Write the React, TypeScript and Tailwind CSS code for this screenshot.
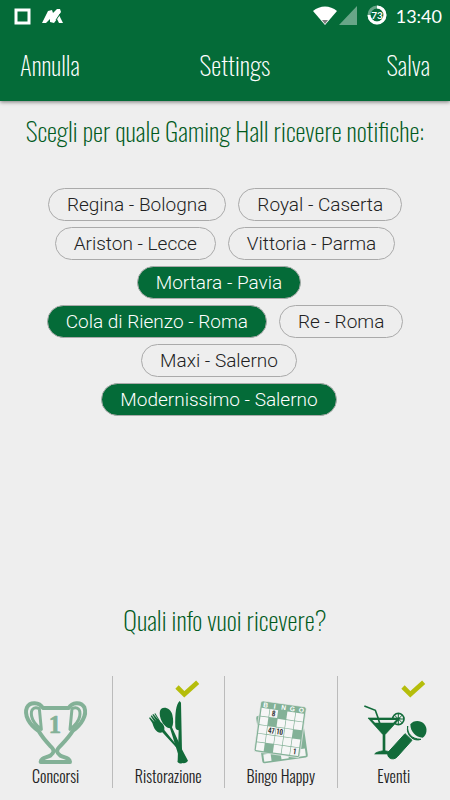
import React, { useState } from 'react';

const condensed = "font-['Oswald','Liberation_Sans_Narrow','Liberation_Sans',sans-serif]";

interface Hall {
  name: string;
  selected: boolean;
  ownRow?: boolean;
}

const initialHalls: Hall[] = [
  { name: 'Regina - Bologna', selected: false },
  { name: 'Royal - Caserta', selected: false },
  { name: 'Ariston - Lecce', selected: false },
  { name: 'Vittoria - Parma', selected: false },
  { name: 'Mortara - Pavia', selected: true, ownRow: true },
  { name: 'Cola di Rienzo - Roma', selected: true },
  { name: 'Re - Roma', selected: false },
  { name: 'Maxi - Salerno', selected: false, ownRow: true },
  { name: 'Modernissimo - Salerno', selected: true, ownRow: true },
];

const Trophy = () => (
  <g stroke="currentColor" fill="none" strokeLinejoin="round">
    <path
      strokeWidth="12"
      d="M129 114H206C216 96 243 94 253 112C262 136 244 164 218 183C205 204 194 214 179 230C168 241 169 248 181 257C197 264 209 264 210 276H122C123 264 136 264 151 257C163 248 164 241 153 230C138 214 128 204 116 183C88 164 71 136 81 112C90 94 118 96 129 114Z"
    />
    <path strokeWidth="9" d="M118 116C101 108 91 119 95 139C98 155 108 166 124 178Z" />
    <path strokeWidth="9" d="M216 116C233 108 243 119 239 139C236 155 226 166 210 178Z" />
    <text
      x="165"
      y="188"
      textAnchor="middle"
      fill="currentColor"
      stroke="currentColor"
      strokeWidth="2"
      className="font-['Liberation_Serif',serif] text-[74px] font-bold"
    >
      1
    </text>
  </g>
);

const Cutlery = () => (
  <g fill="currentColor">
    <path d="M203 93C192 103 189 129 190 171C191 179 195 180 200 181L197 272C203 281 219 279 224 270L210 245L207 98Z" />
    <path d="M147 117C158 108 176 116 181 134C185 151 184 164 180 172L211 240L228 272C221 282 211 280 206 277L174 175C163 174 151 161 146 146C142 134 142 123 147 117Z" />
    <path d="M136 185C129 181 125 172 121 159L111 144L114 142L128 157L116 138L119 136L134 154L121 134L124 132L140 150L127 131L130 130L146 156C154 162 159 170 157 180L210 245L196 275C201 282 212 282 217 277L206 247L151 187C146 189 140 188 136 185Z" />
  </g>
);

const filledCells = ['2,0', '1,1', '4,2', '1,4'];
const cellNumbers = [
  { col: 1, row: 0, value: '8' },
  { col: 1, row: 2, value: '47' },
  { col: 2, row: 2, value: '10' },
  { col: 4, row: 4, value: '1' },
];

const BingoCard = () => (
  <g>
    <g transform="rotate(-8 170 200)">
      <rect x="102" y="128" width="138" height="144" rx="7" fill="currentColor" />
      {[0, 2, 4].map((col) => (
        <rect key={col} x={108 + col * 26} y="245" width="22" height="22" fill="#f4f4f4" />
      ))}
    </g>
    <g transform="translate(108 92) rotate(8)">
      <rect width="138" height="154" rx="7" fill="currentColor" stroke="#eee" strokeWidth="2" />
      {['B', 'I', 'N', 'G', 'O'].map((letter, index) => (
        <text
          key={letter}
          x={16 + index * 27}
          y="18"
          textAnchor="middle"
          fill="#fff"
          className="font-['Liberation_Sans',sans-serif] text-[20px] font-bold"
        >
          {letter}
        </text>
      ))}
      {Array.from({ length: 25 }, (_, i) => {
        const col = i % 5;
        const row = Math.floor(i / 5);
        return filledCells.includes(`${col},${row}`) ? null : (
          <rect key={i} x={5 + col * 26} y={21 + row * 26} width="24" height="24" fill="#f6f6f6" />
        );
      })}
      {cellNumbers.map(({ col, row, value }) => (
        <text
          key={value}
          x={17 + col * 26}
          y={41 + row * 26}
          textAnchor="middle"
          fill="#333"
          className="font-['Oswald','Liberation_Sans',sans-serif] text-[21px] font-medium"
        >
          {value}
        </text>
      ))}
    </g>
  </g>
);

const Party = () => (
  <g stroke="currentColor" fill="none">
    <path d="M79 108L112 121L126 160" strokeWidth="5" />
    <circle cx="181" cy="147" r="17" strokeWidth="5" />
    <path d="M181 130V164M164 147H198M169 135L193 159M193 135L169 159" strokeWidth="3" />
    <path d="M90 144H187L141 194V242C151 244 162 246 164 252H110C113 246 126 244 135 242V194Z" fill="currentColor" strokeWidth="2" />
    <path d="M103 150H174L166 158H111Z" fill="#eee" stroke="none" />
    <path d="M121 148L126 162" strokeWidth="5" />
    <path d="M201 191L222 211L178 260C164 275 143 262 151 246Z" fill="currentColor" stroke="currentColor" strokeWidth="3" />
    <path d="M209 168C207 190 220 207 249 208C229 216 203 198 209 168Z" fill="currentColor" strokeWidth="3" />
    <path d="M217 163C225 151 246 149 258 161C270 174 267 194 254 203C233 202 217 185 217 163Z" fill="currentColor" stroke="none" />
  </g>
);

interface InfoOption {
  label: string;
  icon: React.FC;
  checked: boolean;
}

const initialOptions: InfoOption[] = [
  { label: 'Concorsi', icon: Trophy, checked: false },
  { label: 'Ristorazione', icon: Cutlery, checked: true },
  { label: 'Bingo Happy', icon: BingoCard, checked: false },
  { label: 'Eventi', icon: Party, checked: true },
];

const StatusBar = () => (
  <div className="flex h-8 items-center justify-between px-2">
    <svg viewBox="0 0 60 24" className="ml-1 h-6 w-15" fill="none" aria-hidden="true">
      <rect x="4" y="6" width="13" height="13" stroke="#fff" strokeWidth="3" />
      <path
        d="M30 19L36 7L40 6L41 9L45 5H48L49 8L47 11L51 19H47L45 15L42 19L38 18L38 15L34 19Z"
        fill="#fff"
      />
      <path d="M48 10L44 16" stroke="#046b38" strokeWidth="1" />
    </svg>
    <div className="flex items-center">
      <svg viewBox="0 0 80 24" className="mr-2 h-6 w-20" fill="none" aria-hidden="true">
        <path d="M5 7C12 1 22 1 29 7L17 21Z" fill="#fff" />
        <path d="M14 16H20L17 20Z" fill="#7b7b7b" />
        <path d="M49 2V21H31Z" fill="#68a688" />
        <circle cx="69" cy="11" r="8" stroke="#68a688" strokeWidth="3" />
        <path d="M69 3A8 8 0 1 1 61 11" stroke="#fff" strokeWidth="3" />
        <text x="69" y="15" textAnchor="middle" fill="#fff" className="font-[Lato,sans-serif] text-[10px] font-bold">
          73
        </text>
      </svg>
      <span className="font-[Lato,sans-serif] text-[18px] leading-8 text-white">13:40</span>
    </div>
  </div>
);

const App: React.FC = () => {
  const [halls, setHalls] = useState(initialHalls);
  const [options, setOptions] = useState(initialOptions);

  const toggleHall = (name: string) =>
    setHalls(halls.map((hall) => (hall.name === name ? { ...hall, selected: !hall.selected } : hall)));

  const toggleOption = (label: string) =>
    setOptions(options.map((o) => (o.label === label ? { ...o, checked: !o.checked } : o)));

  return (
    <div className="flex min-h-screen flex-col bg-[#eee]">
      <header className="bg-[#046b38] shadow-[0_1px_4px_rgba(0,0,0,0.5)]">
        <StatusBar />
        <div className={`grid h-[69px] grid-cols-3 items-center px-5 pb-1 font-extralight text-white ${condensed}`}>
          <button type="button" className="justify-self-start text-[25px]">
            Annulla
          </button>
          <h1 className="ml-5 text-center text-[26px]">Settings</h1>
          <button type="button" className="justify-self-end text-[25px]">
            Salva
          </button>
        </div>
      </header>

      <main className="flex grow flex-col pt-[10px]">
        <h2 className={`text-center text-[26px] leading-10 font-extralight text-[#005a1c] ${condensed}`}>
          Scegli per quale Gaming Hall ricevere notifiche:
        </h2>

        <div className="mt-[37px] flex flex-wrap justify-center gap-x-3 gap-y-[6px] px-8">
          {halls.map((hall) => (
            <button
              key={hall.name}
              type="button"
              aria-pressed={hall.selected}
              onClick={() => toggleHall(hall.name)}
              className={`h-[33px] rounded-full border border-[#aaa] px-[18px] font-[Roboto,sans-serif] text-[19px] leading-none font-light whitespace-nowrap ${
                hall.selected ? 'bg-[#046b38] text-white' : 'text-[#222]'
              } ${hall.ownRow ? 'mr-3' : ''}`}
            >
              {hall.name}
            </button>
          ))}
        </div>

        <h2 className={`mt-auto text-center text-[26px] leading-10 font-extralight text-[#005a1c] ${condensed}`}>
          Quali info vuoi ricevere?
        </h2>

        <div className="mt-9 mb-3 grid grid-cols-4 divide-x divide-[#bbb]">
          {options.map(({ label, icon: Icon, checked }) => (
            <button
              key={label}
              type="button"
              aria-pressed={checked}
              onClick={() => toggleOption(label)}
              className="flex h-28 flex-col items-center"
            >
              <svg
                viewBox="0 18 336 270"
                className={`h-[90px] w-28 shrink-0 ${checked ? 'text-[#126b3a]' : 'text-[#83b197]'}`}
                aria-hidden="true"
              >
                <Icon />
                {checked && <path d="M195 51L217 73L257 37" fill="none" stroke="#b5bd0b" strokeWidth="14" />}
              </svg>
              <span className={`text-[16px] leading-5 font-light text-[#222] ${condensed}`}>{label}</span>
            </button>
          ))}
        </div>
      </main>
    </div>
  );
};

export default App;
